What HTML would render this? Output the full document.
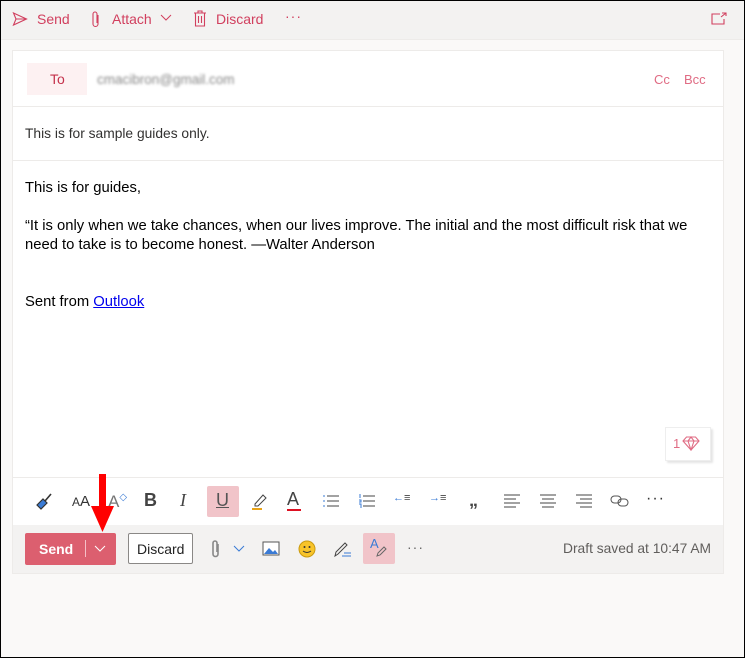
<!DOCTYPE html>
<html><head><meta charset="utf-8"><style>
*{margin:0;padding:0;box-sizing:border-box}
body{width:745px;height:658px;overflow:hidden;background:#faf9f8;font-family:"Liberation Sans",sans-serif;position:relative}
.a{position:absolute;white-space:nowrap}
.pk{color:#d13f5e}
</style></head><body>
<div class="a" style="left:0;top:0;width:745px;height:40px;background:#f3f2f1;border-bottom:1px solid #edebe9"></div>
<svg class="a" style="left:12px;top:11px" width="16" height="16" viewBox="0 0 16 16" fill="none" stroke="#d13f5e" stroke-width="1.1"><path d="M1.5 2 L14.5 8 L1.5 14 L4 8 Z M4 8 H14.5"/></svg>
<div class="a pk" style="left:37px;top:11px;font-size:14px">Send</div>
<svg class="a" style="left:91px;top:10px" width="10" height="18" viewBox="0 0 10 18" fill="none" stroke="#d13f5e" stroke-width="1.1"><path d="M7 5 V14 a2.5 2.5 0 0 1 -5 0 V4 a2 2 0 0 1 4 0 V13"/></svg>
<div class="a pk" style="left:112px;top:11px;font-size:14px">Attach</div>
<svg class="a" style="left:160px;top:14px" width="12" height="8" viewBox="0 0 12 8" fill="none" stroke="#d13f5e"><path d="M1 1 L6 6 L11 1"/></svg>
<svg class="a" style="left:193px;top:10px" width="14" height="17" viewBox="0 0 14 17" fill="none" stroke="#d13f5e" stroke-width="1.1"><path d="M1 3 H13 M5 3 V1 H9 V3 M2.5 3 V16 H11.5 V3 M5.5 6 V13 M8.5 6 V13"/></svg>
<div class="a pk" style="left:216px;top:11px;font-size:14px">Discard</div>
<div class="a pk" style="left:285px;top:8px;font-size:14px;letter-spacing:1px">···</div>
<svg class="a" style="left:711px;top:12px" width="16" height="13" viewBox="0 0 16 13" fill="none" stroke="#d13f5e" stroke-width="1.1"><path d="M9 2 H1 V12 H13 V7 M10 5 L15 1 M11 1 H15 V4"/></svg>

<div class="a" style="left:12px;top:50px;width:712px;height:524px;background:#fff;border:1px solid #edebe9"></div>
<div class="a" style="left:27px;top:63px;width:60px;height:32px;background:#fdf1f2"></div>
<div class="a" style="left:50px;top:71px;font-size:14px;color:#c4314b">To</div>
<div class="a" style="left:97px;top:72px;font-size:13.5px;color:#888;filter:blur(1.3px)">cmacibron@gmail.com</div>
<div class="a pk" style="left:654px;top:72px;font-size:13px;color:#e06c84">Cc</div>
<div class="a pk" style="left:684px;top:72px;font-size:13px;color:#e06c84">Bcc</div>
<div class="a" style="left:13px;top:106px;width:710px;height:1px;background:#edebe9"></div>
<div class="a" style="left:25px;top:126px;font-size:13.8px;color:#323130">This is for sample guides only.</div>
<div class="a" style="left:13px;top:160px;width:710px;height:1px;background:#edebe9"></div>
<div class="a" style="left:25px;top:179px;font-size:14.8px;color:#000;line-height:19px">This is for guides,<br><br>“It is only when we take chances, when our lives improve. The initial and the most difficult risk that we<br>need to take is to become honest. —Walter Anderson<br><br><br>Sent from <span style="color:#0000ee;text-decoration:underline">Outlook</span></div>
<div class="a" style="left:665px;top:427px;width:46px;height:34px;background:#fff;border:1px solid #eee;box-shadow:2px 2px 2px #e5e5e5"></div>
<div class="a" style="left:673px;top:436px;font-size:13px;color:#e06c84">1</div>
<svg class="a" style="left:682px;top:436px" width="18" height="15" viewBox="0 0 18 15" fill="none" stroke="#e06c84" stroke-width="1.1"><path d="M1 5 L4.5 1 H13.5 L17 5 L9 14 Z M1 5 H17 M6 5 L9 14 L12 5 M6 5 L9 1 L12 5"/></svg>
<div class="a" style="left:13px;top:477px;width:710px;height:1px;background:#edebe9"></div>

<div class="a" style="left:207px;top:486px;width:32px;height:31px;background:#f1c4c9;border-radius:2px"></div>
<svg class="a" style="left:34px;top:491px" width="20" height="20" viewBox="0 0 20 20"><path d="M3 14 L9 8 L13 12 L7 18 Z" fill="#3a7bd5" stroke="#333" stroke-width="1.2"/><path d="M11 10 L17 3" stroke="#333" stroke-width="1.6"/></svg>
<div class="a" style="left:72px;top:493px;font-size:12px;color:#333">A<span style="font-size:15px">A</span></div>
<div class="a" style="left:108px;top:492px;font-size:17px;color:#777">A<span style="font-size:10px;color:#3a7bd5;vertical-align:top">◇</span></div>
<div class="a" style="left:144px;top:490px;font-size:18px;font-weight:bold;color:#444">B</div>
<div class="a" style="left:180px;top:490px;font-size:18px;font-style:italic;font-family:'Liberation Serif',serif;color:#444">I</div>
<div class="a" style="left:216px;top:490px;font-size:18px;color:#555;text-decoration:underline">U</div>
<svg class="a" style="left:250px;top:491px" width="20" height="20" viewBox="0 0 20 20" fill="none"><path d="M5 13 L13 4 L16 7 L8 15 L5 15 Z" stroke="#444"/><path d="M2 18 H12" stroke="#e8a317" stroke-width="2"/></svg>
<div class="a" style="left:287px;top:489px;font-size:18px;color:#444">A</div>
<div class="a" style="left:287px;top:509px;width:14px;height:2px;background:#d12"></div>
<svg class="a" style="left:322px;top:494px" width="18" height="14" viewBox="0 0 18 14" stroke="#444"><path d="M5 2 H17 M5 7 H17 M5 12 H17" /><path d="M1 2 H3 M1 7 H3 M1 12 H3" stroke="#3a7bd5"/></svg>
<svg class="a" style="left:358px;top:494px" width="18" height="14" viewBox="0 0 18 14" stroke="#444"><path d="M5 2 H17 M5 7 H17 M5 12 H17" /><path d="M2 0 V4 M1 6 H3 V8 H1 M1 10 H3 V14" stroke="#3a7bd5" fill="none"/></svg>
<div class="a" style="left:393px;top:492px;font-size:11px;color:#3a7bd5">←<span style="color:#444">≡</span></div>
<div class="a" style="left:429px;top:492px;font-size:11px;color:#3a7bd5">→<span style="color:#444">≡</span></div>
<div class="a" style="left:469px;top:490px;font-size:18px;font-weight:bold;color:#444">„</div>
<svg class="a" style="left:503px;top:494px" width="18" height="14" viewBox="0 0 18 14" stroke="#444"><path d="M1 1 H17 M1 5 H13 M1 9 H17 M1 13 H13"/></svg>
<svg class="a" style="left:539px;top:494px" width="18" height="14" viewBox="0 0 18 14" stroke="#444"><path d="M1 1 H17 M3 5 H15 M1 9 H17 M3 13 H15"/></svg>
<svg class="a" style="left:575px;top:494px" width="18" height="14" viewBox="0 0 18 14" stroke="#444"><path d="M1 1 H17 M5 5 H17 M1 9 H17 M5 13 H17"/></svg>
<svg class="a" style="left:610px;top:494px" width="20" height="14" viewBox="0 0 20 14" fill="none" stroke="#555"><rect x="1" y="2" width="10" height="7" rx="3.5"/><rect x="8" y="5" width="10" height="7" rx="3.5"/></svg>
<div class="a" style="left:646px;top:490px;font-size:16px;color:#333;letter-spacing:1px">···</div>

<div class="a" style="left:13px;top:525px;width:710px;height:48px;background:#f3f2f1"></div>
<div class="a" style="left:25px;top:533px;width:91px;height:32px;background:#dc5f6f;border-radius:2px"></div>
<div class="a" style="left:39px;top:541px;font-size:14px;font-weight:bold;color:#fff">Send</div>
<div class="a" style="left:85px;top:540px;width:1px;height:17px;background:#f5c0c7"></div>
<svg class="a" style="left:94px;top:545px" width="12" height="8" viewBox="0 0 12 8" fill="none" stroke="#fff"><path d="M1 1 L6 6 L11 1"/></svg>
<div class="a" style="left:128px;top:533px;width:65px;height:31px;background:#fff;border:1px solid #8a8886;border-radius:2px"></div>
<div class="a" style="left:137px;top:541px;font-size:14px;color:#222">Discard</div>
<svg class="a" style="left:211px;top:539px" width="10" height="20" viewBox="0 0 10 20" fill="none" stroke="#888" stroke-width="1.6"><path d="M7 5 V15 a2.5 2.5 0 0 1 -5 0 V4 a2 2 0 0 1 4 0 V13"/></svg>
<svg class="a" style="left:233px;top:545px" width="12" height="8" viewBox="0 0 12 8" fill="none" stroke="#3a7bd5"><path d="M1 1 L6 6 L11 1"/></svg>
<svg class="a" style="left:262px;top:541px" width="18" height="15" viewBox="0 0 18 15"><rect x="1" y="1" width="16" height="13" fill="#fff" stroke="#555"/><path d="M2 13 L7 7 L11 11 L13 9 L16 13 Z" fill="#3a7bd5"/></svg>
<svg class="a" style="left:298px;top:540px" width="18" height="18" viewBox="0 0 18 18"><circle cx="9" cy="9" r="8" fill="#f8c42a" stroke="#c99a10"/><circle cx="6.5" cy="7" r="1" fill="#333"/><circle cx="11.5" cy="7" r="1" fill="#333"/><path d="M5 11 Q9 14 13 11" stroke="#333" fill="none"/></svg>
<svg class="a" style="left:333px;top:540px" width="20" height="18" viewBox="0 0 20 18" fill="none" stroke="#444"><path d="M2 16 L3 12 L12 3 L14 5 L5 14 Z"/><path d="M9 16 H18 M11 13 H18" stroke="#3a7bd5"/></svg>
<div class="a" style="left:363px;top:533px;width:32px;height:31px;background:#f1c4c9;border-radius:2px"></div>
<div class="a" style="left:370px;top:536px;font-size:13px;color:#3a7bd5">A</div>
<svg class="a" style="left:375px;top:546px" width="12" height="12" viewBox="0 0 12 12" fill="none" stroke="#666"><path d="M2 10 L3 7 L9 1 L11 3 L5 9 Z"/></svg>
<div class="a" style="left:407px;top:539px;font-size:14px;color:#666;letter-spacing:1px">···</div>
<div class="a" style="left:563px;top:541px;font-size:13.8px;color:#605e5c">Draft saved at 10:47 AM</div>

<svg class="a" style="left:88px;top:474px" width="30" height="58" viewBox="0 0 30 58"><path d="M11 0 H18 V32 H26 L14.5 58 L3 32 H11 Z" fill="#f00"/></svg>
<div class="a" style="left:0;top:0;width:745px;height:658px;border:1px solid #000"></div>
</body></html>
